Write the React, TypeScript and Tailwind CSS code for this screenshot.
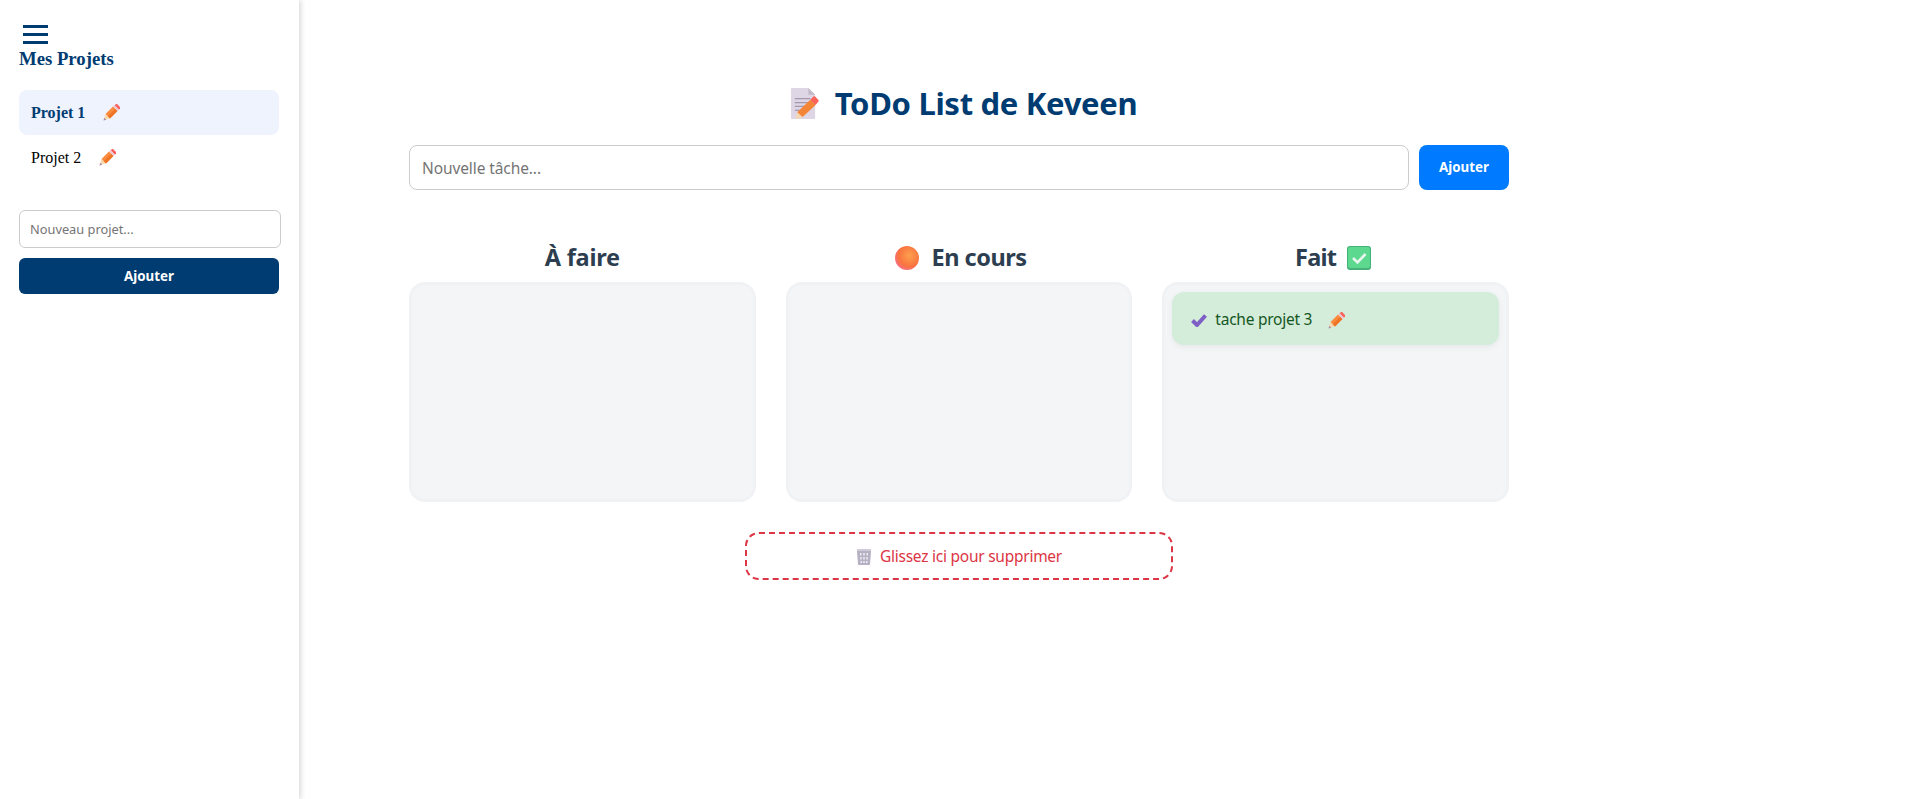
const sans = "font-['Noto_Sans','Open_Sans',sans-serif]";

function Pencil({ className = "" }: { className?: string }) {
  return (
    <svg viewBox="0 0 32 32" className={className}>
      <path d="M1 31l3.5-12 8 8z" fill="#f7d9b0" />
      <path d="M1 31l1.5-5 3.5 3.5z" fill="#a78aa8" />
      <path d="M4.8 18.8L18.8 4.8l8.4 8.4-14 14z" fill="#fb8a3c" />
      <path d="M9 23L23 9l4.2 4.2-14 14z" fill="#ee7426" />
      <path d="M21.5 2l3-1.5c1-.5 2-.3 3 .5l4 4c.8 1 1 2 .5 3L30 11z" fill="#f9625c" />
      <path d="M18.8 4.8l2.7-2.7L30 10.6l-2.8 2.6z" fill="#ecc6cf" />
    </svg>
  );
}

function Memo() {
  return (
    <svg viewBox="0 0 30 34" className="w-[29px] h-[33px] shrink-0">
      <path d="M1 2q0-1 1-1h17l7 7v24q0 1-1 1H2q-1 0-1-1z" fill="#ded5e5" />
      <path d="M19 1l7 7h-7z" fill="#c2b9c9" />
      <path d="M5 12h16M5 16h16M5 20h12M5 24h7" stroke="#a398ad" strokeWidth="1.3" />
      <path d="M6 33l1.5-7 5.5 5z" fill="#f5d7b0" />
      <path d="M7.5 26L21 13l5.500 5.500L13 31z" fill="#f58536" />
      <path d="M21 13l3-3c.8-.6 1.500-.6 2.200 0l3 3c.6.8.6 1.500 0 2.200l-2.700 3.300z" fill="#fb6258" />
    </svg>
  );
}

function Orb() {
  return (
    <svg viewBox="0 0 24 24" className="w-6 h-6 shrink-0 mr-[13px]">
      <defs>
        <radialGradient id="orb" cx="60%" cy="40%" r="65%">
          <stop offset="0%" stopColor="#fda04e" />
          <stop offset="70%" stopColor="#f9733f" />
          <stop offset="100%" stopColor="#f7708a" />
        </radialGradient>
      </defs>
      <circle cx="12" cy="12" r="12" fill="url(#orb)" />
    </svg>
  );
}

function CheckBox() {
  return (
    <svg viewBox="0 0 24 24" className="w-6 h-6 shrink-0 ml-[11px]">
      <rect width="24" height="24" rx="3" fill="#46b27a" />
      <rect x="1" y="1" width="22" height="21" rx="2.500" fill="#5dd88f" />
      <path d="M6 12l4.500 4.500L18.500 8" fill="none" stroke="#e8f6ee" strokeWidth="2.600" />
    </svg>
  );
}

function Tick() {
  return (
    <svg viewBox="0 0 16 14" className="w-4 h-[14px] shrink-0">
      <path d="M1.500 7.500l4.500 4.500L14.500 2.500" fill="none" stroke="#7e5fc6" strokeWidth="4" />
    </svg>
  );
}

function Trash() {
  return (
    <svg viewBox="0 0 16 17" className="w-4 h-[17px] shrink-0">
      <path d="M1 1h14v2.500l-1 12.500q0 1-1 1H3q-1 0-1-1L1 3.500z" fill="#b5b0c2" />
      <rect x="1" y="1" width="14" height="2" fill="#cfcbd8" />
      <path d="M4 5h1.500v2.500H4zM7.200 5h1.600v2.500H7.200zM10.500 5H12v2.500h-1.500zM4.200 9h1.500v2.500H4.200zM7.200 9h1.600v2.500H7.200zM10.300 9h1.500v2.500h-1.500zM4.500 13H6v2H4.500zM7.200 13h1.600v2H7.200zM10 13h1.500v2H10z" fill="#eeecf3" />
    </svg>
  );
}

function Column({ title, children }: { title: React.ReactNode; children?: React.ReactNode }) {
  return (
    <div className="flex-1 flex flex-col">
      <h2 className={`h-[34px] mb-[7px] flex items-center justify-center text-[23.5px] tracking-[-0.2px] font-bold text-[#2c3e50] ${sans}`}>{title}</h2>
      <div className="h-[220px] rounded-[16px] bg-[#f4f5f7] border-[3px] border-[#f1f2f4] p-[7px]">{children}</div>
    </div>
  );
}

export default function App() {
  return (
    <div className="flex min-h-[799px] bg-white">
      <aside className="w-[299px] h-[799px] shrink-0 bg-white shadow-[2px_0_5px_rgba(0,0,0,0.15)] pl-[19px] pr-[19px] pt-[25px] font-['Liberation_Serif',serif]">
        <div className="ml-[4px] w-[25px] h-[19px] flex flex-col justify-between">
          <span className="h-[3px] bg-[#003c71]" />
          <span className="h-[3px] bg-[#003c71]" />
          <span className="h-[3px] bg-[#003c71]" />
        </div>
        <h3 className="mt-[4px] text-[18.72px] leading-[21px] font-bold text-[#003c71] whitespace-nowrap">Mes Projets</h3>
        <ul className="mt-[21px] w-[260px]">
          <li className="h-[45px] rounded-[8px] bg-[#eff3fe] pl-[12px] flex items-center gap-[18px] font-bold text-[16px] text-[#003c71]">
            Projet 1 <Pencil className="w-[17px] h-[17px]" />
          </li>
          <li className="h-[45px] pl-[12px] flex items-center gap-[18px] text-[16px] text-black">
            Projet 2 <Pencil className="w-[17px] h-[17px]" />
          </li>
        </ul>
        <input
          placeholder="Nouveau projet..."
          className="mt-[30px] block w-[262px] h-[38px] rounded-[6px] border border-[#cccccc] px-[10px] text-[12.8px] font-['Noto_Sans',sans-serif] placeholder:text-[#757575] outline-none"
        />
        <button className="mt-[10px] block w-[260px] h-[36px] pt-[1px] rounded-[6px] bg-[#003c71] text-white text-[13.33px] font-bold font-['Noto_Sans',sans-serif]">
          Ajouter
        </button>
      </aside>
      <main className={`flex-1 pl-[110px] ${sans}`}>
        <div className="w-[1100px]">
          <h1 className="mt-[82px] h-[42px] flex items-center justify-center gap-[16px] pl-[9px] text-[31px] tracking-[-0.3px] font-bold text-[#003c71]">
            <Memo /> ToDo List de Keveen
          </h1>
          <div className="mt-[21px] flex gap-[10px]">
            <input
              placeholder="Nouvelle tâche..."
              className="flex-1 h-[45px] rounded-[8px] border border-[#cccccc] px-[12px] text-[15.5px] tracking-[-0.1px] placeholder:text-[#757575] outline-none"
            />
            <button className="w-[90px] h-[45px] rounded-[8px] bg-[#007bff] text-white text-[13.33px] font-bold font-['Noto_Sans',sans-serif]">
              Ajouter
            </button>
          </div>
          <div className="mt-[51px] flex gap-[30px]">
            <Column title="À faire" />
            <Column title={<span className="flex items-center pl-[3px] tracking-[-0.5px]"><Orb /> En cours</span>} />
            <Column title={<span className="flex items-center pr-[5px] tracking-[-0.7px]">Fait <CheckBox /></span>}>
              <div className="h-[53px] pt-[3px] rounded-[12px] bg-[#d4edda] shadow-[0_2px_6px_rgba(0,0,0,0.06)] pl-[19px] flex items-center text-[15.5px] tracking-[-0.25px] text-[#155724]">
                <Tick />
                <span className="ml-[8px]">tache projet 3</span>
                <Pencil className="ml-[16px] w-[17px] h-[17px]" />
              </div>
            </Column>
          </div>
          <div className="mx-auto mt-[30px] w-[428px] h-[48px] pt-[1px] rounded-[14px] border-2 border-dashed border-[#dc3545] flex items-center justify-center gap-[8px] text-[15.5px] tracking-[-0.25px] text-[#dc3545]">
            <Trash /> Glissez ici pour supprimer
          </div>
        </div>
      </main>
    </div>
  );
}
